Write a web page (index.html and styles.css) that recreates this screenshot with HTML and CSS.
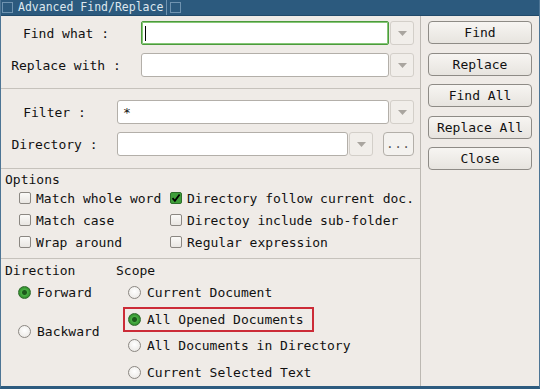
FILE: index.html
```html
<!DOCTYPE html>
<html lang="en">
<head>
  <meta charset="UTF-8">
  <title>Advanced Find/Replace</title>
  <link rel="stylesheet" href="styles.css">
</head>
<body>
  <div class="window">
    <div class="titlebar">
      <span class="title-box"></span>
      <span class="title-text">Advanced Find/Replace</span>
      <span class="title-box"></span>
    </div>

    <div class="content">
      <div class="main">
        <div class="section search">
          <div class="row">
            <label class="label">Find what :</label>
            <div class="combo">
              <div class="field focused"><span class="caret"></span></div>
              <div class="arrow"><svg width="9" height="5" viewBox="0 0 9 5"><path d="M0 0h9L4.5 5z" fill="#a9a59f"/></svg></div>
            </div>
          </div>
          <div class="row">
            <label class="label">Replace with :</label>
            <div class="combo">
              <div class="field"></div>
              <div class="arrow"><svg width="9" height="5" viewBox="0 0 9 5"><path d="M0 0h9L4.5 5z" fill="#a9a59f"/></svg></div>
            </div>
          </div>
        </div>

        <div class="section paths">
          <div class="row">
            <label class="label">Filter :</label>
            <div class="combo">
              <div class="field"><span class="value">*</span></div>
              <div class="arrow"><svg width="9" height="5" viewBox="0 0 9 5"><path d="M0 0h9L4.5 5z" fill="#a9a59f"/></svg></div>
            </div>
          </div>
          <div class="row">
            <label class="label">Directory :</label>
            <div class="combo short">
              <div class="field"></div>
              <div class="arrow"><svg width="9" height="5" viewBox="0 0 9 5"><path d="M0 0h9L4.5 5z" fill="#a9a59f"/></svg></div>
            </div>
            <button class="browse">...</button>
          </div>
        </div>

        <div class="section options">
          <div class="group-title options-title">Options</div>
          <div class="checks">
            <div class="check"><span class="box"></span>Match whole word</div>
            <div class="check"><span class="box checked"><svg width="10" height="10" viewBox="0 0 10 10"><path d="M1.5 5.2l2.4 2.6L8.6 1.5" fill="none" stroke="#000" stroke-width="1.8"/></svg></span>Directory follow current doc.</div>
            <div class="check"><span class="box"></span>Match case</div>
            <div class="check"><span class="box"></span>Directoy include sub-folder</div>
            <div class="check"><span class="box"></span>Wrap around</div>
            <div class="check"><span class="box"></span>Regular expression</div>
          </div>
        </div>

        <div class="section bottom">
          <div class="direction">
            <div class="group-title">Direction</div>
            <div class="radios">
              <div class="radio"><span class="dot on"></span>Forward</div>
              <div class="radio backward"><span class="dot"></span>Backward</div>
            </div>
          </div>
          <div class="scope">
            <div class="group-title">Scope</div>
            <div class="radios">
              <div class="radio"><span class="dot"></span>Current Document</div>
              <div class="radio"><span class="highlight"><span class="dot on"></span>All Opened Documents</span></div>
              <div class="radio"><span class="dot"></span>All Documents in Directory</div>
              <div class="radio"><span class="dot"></span>Current Selected Text</div>
            </div>
          </div>
        </div>
      </div>

      <div class="side">
        <button class="btn">Find</button>
        <button class="btn">Replace</button>
        <button class="btn">Find All</button>
        <button class="btn">Replace All</button>
        <button class="btn">Close</button>
      </div>
    </div>
  </div>
</body>
</html>
```

FILE: styles.css
```css
* {
  margin: 0;
  padding: 0;
  box-sizing: border-box;
  font-family: "DejaVu Sans Mono", "Liberation Mono", monospace;
}

body {
  background: #efebe7;
  color: #111;
  font-size: 13px;
}

.window {
  width: 540px;
  height: 389px;
  border-left: 1px solid #4d7595;
  border-right: 1px solid #4d7595;
  border-bottom: 3px solid #2d5b7f;
  background: #efebe7;
  display: flex;
  flex-direction: column;
}

.titlebar {
  height: 16px;
  background: #2c5a7e;
  border-bottom: 1px solid #214a6a;
  display: flex;
  align-items: center;
  gap: 3px;
  padding-left: 1px;
}

.title-box {
  width: 11px;
  height: 11px;
  border: 1px solid #6f93b0;
}

.title-text {
  font-size: 11.5px;
  color: #dde7ee;
  padding: 0 3px 0 2px;
  line-height: 15px;
  border-right: 1px solid #6f93b0;
}

.content {
  flex: 1;
  display: flex;
}

.main {
  width: 420px;
  border-right: 1px solid #bcb8b2;
  display: flex;
  flex-direction: column;
}

.section {
  border-bottom: 1px solid #c6c2bc;
}

.row {
  display: flex;
  align-items: center;
  height: 24px;
}

.search {
  padding: 5px 0 11px;
  display: flex;
  flex-direction: column;
  gap: 8px;
}

.search .label {
  width: 130px;
  margin-right: 10px;
  text-align: center;
}

.paths {
  padding: 11px 0 12px;
  display: flex;
  flex-direction: column;
  gap: 8px;
}

.paths .label {
  width: 107px;
  margin-right: 9px;
  text-align: center;
}

.combo {
  display: flex;
  height: 24px;
  width: 273px;
}

.paths .combo {
  width: 297px;
}

.paths .combo.short {
  width: 256px;
}

.field {
  flex: 1;
  background: #fff;
  border: 1px solid #b3afa9;
  border-radius: 3px;
  display: flex;
  align-items: center;
  padding-left: 5px;
}

.field.focused {
  border: 1px solid #4c9b3d;
  box-shadow: inset 0 0 0 1px #86c777;
  border-radius: 2px;
  padding-left: 3px;
}

.caret {
  width: 1px;
  height: 15px;
  background: #000;
}

.value {
  font-size: 13px;
}

.arrow {
  width: 24px;
  margin-left: 1px;
  border: 1px solid #d3cfc9;
  border-radius: 3px;
  background: #f1eeea;
  display: flex;
  align-items: center;
  justify-content: center;
}

.browse {
  width: 31px;
  height: 24px;
  margin-left: 10px;
  border: 1px solid #b3afa9;
  border-radius: 4px;
  background: #f4f2ef;
  color: #555;
  font-size: 12px;
  letter-spacing: 1px;
}

.group-title {
  line-height: 15px;
  height: 16px;
}

.group-title.options-title {
  height: 15px;
}

.options {
  padding: 3px 0 5px 4px;
}

.checks {
  display: grid;
  grid-template-columns: 151px auto;
  padding-left: 14px;
}

.check {
  display: flex;
  align-items: center;
  gap: 5px;
  height: 22px;
  white-space: nowrap;
}

.box {
  width: 12px;
  height: 12px;
  border: 1px solid #8b8782;
  border-radius: 2px;
  background: linear-gradient(#fbfaf8, #e9e6e2);
  display: flex;
  align-items: center;
  justify-content: center;
}

.box.checked {
  background: #3f9e3a;
  border-color: #2d6e2a;
}

.bottom {
  flex: 1;
  border-bottom: none;
  display: flex;
  padding: 4px 0 0 4px;
}

.direction {
  width: 111px;
}

.radios {
  padding-left: 13px;
}

.scope .radios {
  padding-left: 12px;
}

.radio {
  display: flex;
  align-items: center;
  height: 26.7px;
  gap: 6px;
  white-space: nowrap;
}

.radio.backward {
  margin-top: 12px;
}

.dot {
  width: 13px;
  height: 13px;
  border-radius: 50%;
  border: 1px solid #8b8782;
  background: radial-gradient(circle at 50% 40%, #ffffff, #e7e4e0);
  flex-shrink: 0;
}

.dot.on {
  border-color: #2f6b2c;
  background: radial-gradient(circle, #1c5a1b 0 2px, #49b043 3px, #2f8a2b 6px);
}

.highlight {
  display: flex;
  align-items: center;
  gap: 6px;
  height: 25px;
  width: 191px;
  margin-left: -5px;
  padding-left: 3px;
  border: 2px solid #cc2b37;
}

.side {
  flex: 1;
  padding: 5px 0 0 7px;
  display: flex;
  flex-direction: column;
  gap: 8.5px;
}

.btn {
  width: 104px;
  height: 23px;
  border: 1px solid #8e8b86;
  border-radius: 4px;
  background: linear-gradient(#f7f5f2, #e7e4df);
  color: #111;
  font-size: 13px;
}
```
